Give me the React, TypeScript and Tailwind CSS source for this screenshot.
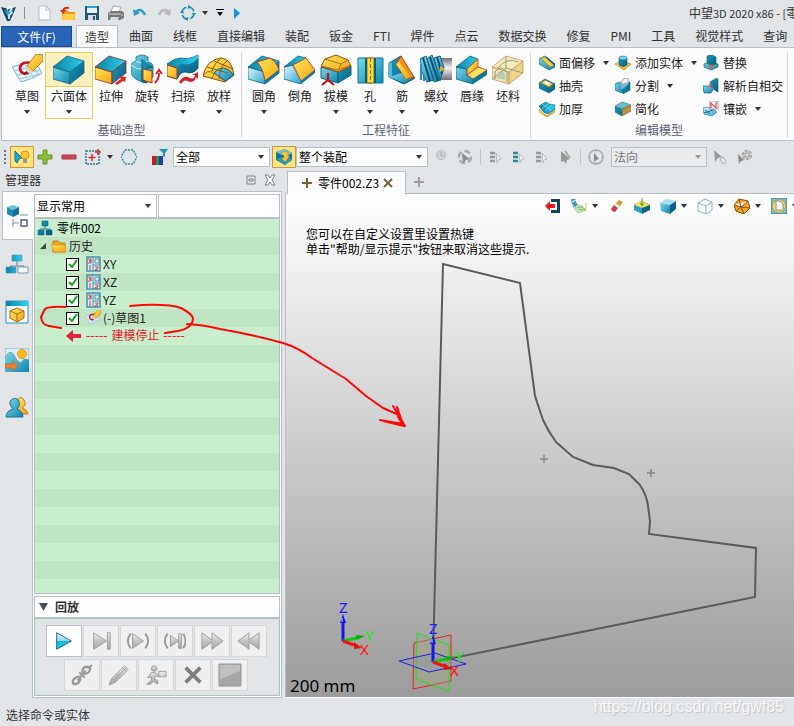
import type { ReactNode } from 'react';
import clsx from 'clsx';

const TOP = 'M0 13 14 2 31 7 17 18Z';
const LEFT = 'M0 13 17 18V30L0 25Z';
const RIGHT = 'M17 18 31 7V19L17 30Z';

function Gradients() {
  return (
    <svg className="absolute size-0" aria-hidden="true">
      <defs>
        <linearGradient id="teal" x1="0" y1="0" x2="1" y2="1">
          <stop offset="0" stopColor="#7fd4ea" />
          <stop offset="1" stopColor="#0a86ac" />
        </linearGradient>
        <linearGradient id="tealDark" x1="0" y1="0" x2="1" y2="1">
          <stop offset="0" stopColor="#1d9cc0" />
          <stop offset="1" stopColor="#075a7c" />
        </linearGradient>
        <linearGradient id="tealTop" x1="0" y1="0" x2="1" y2="0">
          <stop offset="0" stopColor="#0f7f9f" />
          <stop offset="1" stopColor="#2bd0f4" />
        </linearGradient>
        <linearGradient id="pale" x1="0" y1="0" x2="1" y2="1">
          <stop offset="0" stopColor="#e8f6fb" />
          <stop offset="1" stopColor="#1fa9d2" />
        </linearGradient>
        <linearGradient id="gold" x1="0" y1="0" x2="1" y2="1">
          <stop offset="0" stopColor="#ffe95c" />
          <stop offset="1" stopColor="#f6a313" />
        </linearGradient>
        <linearGradient id="metal" x1="0" y1="0" x2="0" y2="1">
          <stop offset="0" stopColor="#6d7074" />
          <stop offset="0.45" stopColor="#f2f2f2" />
          <stop offset="1" stopColor="#6d7074" />
        </linearGradient>
        <linearGradient id="gray" x1="0" y1="0" x2="0" y2="1">
          <stop offset="0" stopColor="#f0f0f0" />
          <stop offset="0.5" stopColor="#c4c4c4" />
          <stop offset="1" stopColor="#a8a8a8" />
        </linearGradient>
        <linearGradient id="play" x1="0" y1="0" x2="0" y2="1">
          <stop offset="0" stopColor="#e2f4fb" />
          <stop offset="0.48" stopColor="#8fd8f0" />
          <stop offset="0.52" stopColor="#12b4e4" />
          <stop offset="1" stopColor="#27d3f5" />
        </linearGradient>
      </defs>
    </svg>
  );
}

type IconProps = { size?: 'lg' | 'md' | 'sm'; children: ReactNode };

// lg is drawn on a 32 grid, md on 24 and sm on 16
function Icon({ size = 'sm', children }: IconProps) {
  const box = size === 'lg' ? 32 : size === 'md' ? 24 : 16;
  return (
    <svg
      viewBox={`0 0 ${box} ${box}`}
      className={clsx('shrink-0', size === 'lg' && 'size-8', size === 'md' && 'size-6', size === 'sm' && 'size-4')}
      fill="none"
      aria-hidden="true"
    >
      {children}
    </svg>
  );
}

function Caret({ className = 'text-[#333]' }: { className?: string }) {
  return (
    <svg viewBox="0 0 6 4" className={clsx('h-1 w-1.5 shrink-0', className)} aria-hidden="true">
      <path d="M0 0h6L3 4Z" fill="currentColor" />
    </svg>
  );
}

function Block({ left = 'url(#teal)', right = 'url(#tealDark)', top = 'url(#tealTop)', stroke = '#0b6884' }) {
  return (
    <g stroke={stroke} strokeWidth="0.8" strokeLinejoin="round">
      <path d={LEFT} fill={left} />
      <path d={RIGHT} fill={right} />
      <path d={TOP} fill={top} />
    </g>
  );
}

const art: Record<string, ReactNode> = {
  sketch: (
    <>
      <path d="M1 13Q12 9 24 7L31 19Q24 24 10 28Q5 20 1 13Z" fill="#e4f2fb" stroke="#7fb0d0" />
      <path d="M3 17 27 11M5 21 30 16M8 25 28 20M7 11 17 26M13 9 23 24M19 8 28 21" stroke="#9cc8e2" />
      <path d="M20 9Q10 7 9 14 9 21 18 19" stroke="#c8102e" strokeWidth="2.6" />
      <path d="M25 0 32 1V7L22 17 16 12Z" fill="url(#gold)" stroke="#a06c10" strokeWidth="0.8" />
      <path d="m16 12 6 5-8 3Z" fill="#f3cfa5" />
      <path d="m15 17 2 2-4 2Z" fill="#333" />
    </>
  ),
  box: <Block />,
  extrude: (
    <>
      <Block left="url(#gold)" stroke="#8c2f22" />
      <path d="M20 29 26 25 24 22 31 23 30 28 28 27 22 31Z" fill="#d8262d" />
    </>
  ),
  revolve: (
    <>
      <path d="M0 10Q4 7 5 7V3Q11-1 17 3V8Q22 9 22 12V23L16 26 11 15V28Q2 25 0 19Z" fill="url(#teal)" stroke="#14708e" strokeWidth="0.8" />
      <path d="M5 7Q11 11 17 7M0 11Q6 16 11 15" stroke="#c9eef8" />
      <path d="M11 5V28L16 29V14L22 13" fill="url(#tealDark)" stroke="#0b5f7d" />
      <path d="M12 15 21 17V29L12 26Z" fill="url(#gold)" stroke="#a43a20" />
      <path d="M24 29Q28 25 28 19M25 20 28 16 31 20" stroke="#d21f2b" strokeWidth="2" />
    </>
  ),
  sweep: (
    <>
      <path d="M0 10Q8 4 14 4Q22 6 31 1V14Q26 21 19 18Q14 17 10 25L0 22Z" fill="url(#tealDark)" stroke="#0b5f7d" />
      <path d="M0 10Q8 4 14 4Q22 6 31 1V4Q24 12 17 10Q13 9 10 13Z" fill="url(#tealTop)" />
      <path d="M0 11 10 14V25L0 22Z" fill="url(#gold)" stroke="#a43a20" />
      <path d="M12 28Q17 20 23 24 27 26 28 21L25 21 31 18V25L29 23Q28 28 23 28 17 24 14 30Z" fill="#d21f2b" />
    </>
  ),
  loft: (
    <>
      <path d="M0 22Q3 6 18 4Q29 5 31 21L22 28Z" fill="url(#gold)" stroke="#96501b" />
      <path d="M11 19Q20 8 31 21L22 27Z" fill="url(#teal)" stroke="#0b5f7d" />
      <path d="M4 13 25 19M11 7 30 15M18 4Q8 12 8 24M24 7Q18 10 16 25" stroke="#8e5a1b" />
      <path d="M0 22Q5 14 11 20L9 24Z" fill="#ffd530" stroke="#96501b" strokeWidth="0.8" />
    </>
  ),
  fillet: (
    <>
      <Block left="url(#pale)" />
      <path d="M9 8 22 4Q29 8 31 16L17 27Q15 14 9 8Z" fill="url(#gold)" stroke="#b03a20" />
      <path d="M17 27 31 16V19L17 30Z" fill="#0c7ca1" />
    </>
  ),
  chamfer: (
    <>
      <path d="M0 13 9 11 17 27V30L0 25Z" fill="url(#pale)" stroke="#0b6884" strokeWidth="0.8" />
      <path d="M0 13 14 2 22 4 9 11Z" fill="url(#tealTop)" stroke="#0b6884" strokeWidth="0.8" />
      <path d="M9 11 22 4 31 16 17 27Z" fill="url(#gold)" stroke="#c34928" />
      <path d="M17 27 31 16V19L17 30Z" fill="#0c7ca1" />
    </>
  ),
  draft: (
    <>
      <path d="M1 13 18 18V29L1 24Z" fill="url(#teal)" stroke="#0b6884" />
      <path d="M18 18 31 12V21L18 29Z" fill="url(#tealDark)" stroke="#0b6884" />
      <path d="M1 12 5 5 16 1 28 6 31 12 18 18Z" fill="url(#gold)" stroke="#a2421e" />
      <path d="M1 12 18 16 31 11M18 17 21 10 28 6M5 5 21 10" stroke="#b66b16" />
      <path d="M8 19V26M2 31 8 26 14 31" stroke="#b51820" strokeWidth="2.2" />
    </>
  ),
  hole: (
    <>
      <path d="M4 4H29V29H4Z" fill="url(#teal)" stroke="#0b7897" />
      <path d="M13 4H20V29H13Z" fill="#ffda2e" stroke="#9d7b17" />
      <path d="M16.500 4V29" stroke="#946c18" strokeDasharray="4 2" />
      <path d="M13 4H11V29H13M20 4H22V29H20" fill="#075f7e" />
    </>
  ),
  rib: (
    <>
      <path d="M3 9 15 2V19L29 24 18 30 3 23Z" fill="url(#tealDark)" stroke="#095573" />
      <path d="M3 23 15 19 29 23 18 29Z" fill="url(#teal)" />
      <path d="M3 9 6 8V22L3 24Z" fill="#4bbcdd" />
      <path d="M15 2 28 23 20 25 10 10Z" fill="#f08f14" stroke="#b3441d" />
      <path d="M10 10 13 8 25 23 20 25Z" fill="url(#gold)" />
    </>
  ),
  thread: (
    <>
      <path d="M18 4H32V26H18Z" fill="url(#metal)" />
      <path d="M0 5 6 2 14 26 7 28 0 14ZM7 5 12 1 21 26 14 28Z" fill="url(#teal)" stroke="#145f83" />
      <path d="M14 4 20 2 24 14 20 26Z" fill="url(#teal)" stroke="#145f83" />
      <path d="M3 4 10 27M10 3 18 27M17 3 22 20" stroke="#074f77" strokeWidth="2" />
      <path d="M20 12 25 15 20 18" fill="#f6a313" />
      <path d="M1 10V26M4 22V27" stroke="#258fc0" strokeWidth="2" />
    </>
  ),
  lip: (
    <>
      <path d="M0 13 11 15V22L17 24V30L0 25Z" fill="url(#teal)" stroke="#0b6884" strokeWidth="0.8" />
      <path d="M0 13 14 2 22 5 11 15Z" fill="url(#tealTop)" stroke="#0b6884" strokeWidth="0.8" />
      <path d="M11 15 22 5V13L11 21Z" fill="url(#gold)" stroke="#aa3c22" strokeWidth="0.8" />
      <path d="M11 21 22 13 31 16 17 25Z" fill="#ffe066" stroke="#aa3c22" strokeWidth="0.8" />
      <path d="M17 25 31 16V21L17 30Z" fill="#0b7798" />
    </>
  ),
  stock: (
    <>
      <g opacity="0.8">
        <Block left="#f3dd9c" right="#edca6b" top="#f8e7a4" stroke="#b67739" />
      </g>
      <path d="M3 25V18Q8 10 15 18V28M6 14Q14 3 26 8M0 25 14 14 31 19M14 2V14" stroke="#8c9d80" />
      <path d="M5 24V20Q9 14 13 20V26Z" fill="#9bc5bc" opacity="0.7" />
    </>
  ),
};

const smallArt: Record<string, ReactNode> = {
  offset: (
    <>
      <path d="M0 4 6 1 16 9V12L10 15 0 9Z" fill="url(#teal)" stroke="#0b6884" strokeWidth="0.7" />
      <path d="M2 3 6 2 15 10 11 12Z" fill="#ffcc2d" stroke="#98731c" strokeWidth="0.6" />
      <path d="m6 2 9 8 1-1L8 2Z" fill="#086b8d" />
    </>
  ),
  shell: (
    <>
      <path d="m0 5 6-4 10 5v5l-6 4L0 10Z" fill="url(#tealDark)" stroke="#0b6884" strokeWidth="0.7" />
      <path d="m2 5 4-3 8 4-4 3Z" fill="#ffd65d" stroke="#b26f22" strokeWidth="0.8" />
      <path d="m5 5 2-2 4 2-2 2Z" fill="#fff" />
    </>
  ),
  thicken: (
    <>
      <path d="m0 8 8 7 8-7v3l-8 5-8-5Z" fill="url(#gold)" stroke="#b26f22" strokeWidth="0.5" />
      <path d="M0 5 7 1Q10 4 16 4V8L9 13Q4 12 0 5Z" fill="url(#tealTop)" stroke="#0b6884" strokeWidth="0.7" />
      <path d="m3 8 7-6M6 10l7-6M3 3l9 6" stroke="#a4e1f0" strokeWidth="0.6" />
    </>
  ),
  add: (
    <>
      <path d="m0 9 6-3 10 3-7 6Z" fill="url(#gold)" stroke="#a67618" strokeWidth="0.6" />
      <path d="M4 3v7q4 3 8 0V3Z" fill="url(#tealDark)" stroke="#0b6884" strokeWidth="0.6" />
      <ellipse cx="8" cy="3" rx="4" ry="2" fill="#75d4ef" stroke="#0b6884" strokeWidth="0.6" />
    </>
  ),
  divide: (
    <>
      <path d="m0 6 4-2 4 2v9l-4-1-4-2Z" fill="url(#teal)" stroke="#0b6884" strokeWidth="0.6" />
      <path d="m8 6 7-2v8l-7 4Z" fill="url(#tealDark)" stroke="#0b6884" strokeWidth="0.6" />
      <path d="m6 5 2-4 5-1v6l-6 5Z" fill="#e2f0f5" fillOpacity="0.5" stroke="#97aeb9" />
    </>
  ),
  simplify: (
    <>
      <path d="m0 5 7-4 9 3v6l-9 5-7-4Z" fill="url(#tealDark)" stroke="#56666c" strokeWidth="0.7" />
      <path d="m0 5 7-4 9 3-8 4Z" fill="#69b9cd" />
      <path d="m8 8 8-4v6l-9 5Z" fill="#c58c40" />
      <path d="m6 7 8-3 2 2-8 4Z" fill="#7ab356" />
      <path d="m7 8 9-3" stroke="#db4938" />
    </>
  ),
  replace: (
    <>
      <path d="m1 9 6-2 8 2v3l-7 3-7-3Z" fill="url(#teal)" stroke="#0b6884" strokeWidth="0.7" />
      <path d="m4 1 5-1 4 2v7l-6 1-3-2Z" fill="url(#tealDark)" stroke="#0b6884" strokeWidth="0.7" />
      <path d="M5 11q4-3 6 0-2 3-6 0" fill="#ee5e37" />
    </>
  ),
  resolve: (
    <>
      <path d="m7 4 7-4 1 2v12l-5-3Z" fill="url(#tealDark)" stroke="#0b6884" strokeWidth="0.7" />
      <path d="M0 8h7l4 2-3 5H1Z" fill="url(#teal)" stroke="#0b6884" strokeWidth="0.7" />
      <path d="m6 6 5 5" stroke="#e5463e" strokeWidth="1.300" />
    </>
  ),
  inlay: (
    <>
      <path d="m0 7 5-1 9 5-5 4-8-2Z" fill="url(#pale)" stroke="#28839e" strokeWidth="0.7" />
      <path d="m2 9 5 4M1 12l9-3" stroke="#176f93" />
      <path d="M7 0h8v8H7Z" fill="#fff" stroke="#777" strokeWidth="0.7" />
      <path d="M8 7V2l5 5V1" stroke="#df3c43" strokeWidth="1.100" />
    </>
  ),
};

const menuTabs = ['曲面', '线框', '直接编辑', '装配', '钣金', 'FTI', '焊件', '点云', '数据交换', '修复', 'PMI', '工具', '视觉样式', '查询'];

type Tool = { label: string; icon: string; caret?: boolean; active?: boolean; width?: string };

const basicTools: Tool[] = [
  { label: '草图', icon: 'sketch', caret: true },
  { label: '六面体', icon: 'box', caret: true, active: true, width: 'w-12' },
  { label: '拉伸', icon: 'extrude' },
  { label: '旋转', icon: 'revolve' },
  { label: '扫掠', icon: 'sweep', caret: true },
  { label: '放样', icon: 'loft', caret: true },
];

const featureTools: Tool[] = [
  { label: '圆角', icon: 'fillet', caret: true },
  { label: '倒角', icon: 'chamfer' },
  { label: '拔模', icon: 'draft', caret: true },
  { label: '孔', icon: 'hole', caret: true, width: 'w-8' },
  { label: '筋', icon: 'rib', caret: true, width: 'w-8' },
  { label: '螺纹', icon: 'thread', caret: true },
  { label: '唇缘', icon: 'lip' },
  { label: '坯料', icon: 'stock' },
];

const editColumns: Tool[][] = [
  [
    { label: '面偏移', icon: 'offset', caret: true },
    { label: '抽壳', icon: 'shell' },
    { label: '加厚', icon: 'thicken' },
  ],
  [
    { label: '添加实体', icon: 'add', caret: true },
    { label: '分割', icon: 'divide', caret: true },
    { label: '简化', icon: 'simplify' },
  ],
  [
    { label: '替换', icon: 'replace' },
    { label: '解析自相交', icon: 'resolve' },
    { label: '镶嵌', icon: 'inlay', caret: true },
  ],
];

function ToolButton({ tool }: { tool: Tool }) {
  return (
    <button
      className={clsx(
        'flex shrink-0 flex-col items-center border pb-1 whitespace-nowrap',
        tool.width ?? 'w-9',
        tool.active ? 'border-[#eecb59]' : 'border-transparent',
      )}
    >
      <span className={clsx('flex justify-center self-stretch border-b pt-px', tool.active ? 'border-[#eecb59] bg-[#fdf0bf]' : 'border-transparent')}>
        <Icon size="lg">{art[tool.icon]}</Icon>
      </span>
      <span className="mt-px leading-4">{tool.label}</span>
      <span className="mt-1.5 h-1">{tool.caret && <Caret />}</span>
    </button>
  );
}

function RibbonGroup({ title, children }: { title: string; children: ReactNode }) {
  return (
    <section className="mt-1 mb-0.5 flex shrink-0 flex-col border-r border-[#d5d9de]">
      <div className="flex flex-1">{children}</div>
      <h2 className="mt-[3px] text-center leading-4 text-[#5b6475]">{title}</h2>
    </section>
  );
}

function QuickAccess() {
  return (
    <header className="flex h-[25px] shrink-0 items-center">
      <svg viewBox="0 0 16 16" className="ml-px size-4 shrink-0" aria-label="ZW3D">
        <path d="m0 2 8 2 7-2-2 5-4 9H6L3 9Z" fill="#183f60" />
        <path d="m3 5 5 1 5-2-3 6-2 5-2-5Z" fill="#2a9ad4" />
        <path d="M6 5 9 1l2 2-2 3 2 2-3 2v4" fill="none" stroke="#e8f6fb" strokeWidth="1.500" />
      </svg>
      <span className="mr-2 ml-[7px] h-3 w-px bg-[#8b8f93]" />
      <nav className="ml-[3px] flex items-center gap-2">
        <button aria-label="新建">
          <Icon><path d="M3 1h7l4 4v10H3Z" fill="#fff" stroke="#a9bdd0" /><path d="M10 1v4h4" stroke="#a9bdd0" /></Icon>
        </button>
        <button aria-label="打开">
          <Icon>
            <path d="M2 5h5l2 2h6v8H2Z" fill="#e99d1d" />
            <path d="M3 9h13l-2 6H2Z" fill="#ffcf43" />
            <path d="M3 6Q4 2 9 3" stroke="#dc2f23" strokeWidth="2" /><path d="m0 5 3 4 3-4Z" fill="#dc2f23" />
          </Icon>
        </button>
        <button aria-label="保存">
          <Icon><path d="M1 1h14v14H1Z" fill="#27566e" /><path d="M3 1h10v7H3Z" fill="#eaf2f6" /><path d="M3 2h10" stroke="#21a8d3" strokeWidth="2" /><path d="M4 10h8v5H4Z" fill="#d6dde1" /><path d="M9 11h2v4H9Z" fill="#27566e" /></Icon>
        </button>
        <button aria-label="打印">
          <Icon><path d="m5 1 8 1-2 5H3Z" fill="#fafafa" stroke="#aaa" /><path d="m0 8 3-2h11l2 2v5l-4 2H0Z" fill="#777a7d" /><path d="M1 9h12" stroke="#d5d5d5" /><path d="M3 12h8l-1 3H2Z" fill="#ddd" /><path d="M13 10h2" stroke="#ffd22e" /></Icon>
        </button>
        <button aria-label="撤销">
          <Icon><path d="M4 7Q9 2 13 10" stroke="#2d9dc2" strokeWidth="2.500" /><path d="m1 4 1 7 6-3Z" fill="#2d9dc2" /></Icon>
        </button>
        <button aria-label="重做">
          <Icon><path d="M12 7Q7 2 3 10" stroke="#b7bbbf" strokeWidth="2.500" /><path d="m15 4-1 7-6-3Z" fill="#b7bbbf" /></Icon>
        </button>
        <button aria-label="刷新" className="flex items-center gap-1.5">
          <Icon>
            <circle cx="8" cy="8" r="6" stroke="#2288a8" strokeWidth="1.500" strokeDasharray="7 2.400" />
            <circle cx="8" cy="8" r="5" stroke="#8ed3e4" />
            <path d="m8 0 3 2-3 2ZM16 8l-2 3-2-3ZM8 16l-3-2 3-2ZM0 8l2-3 2 3Z" fill="#2288a8" />
          </Icon>
          <Caret />
        </button>
        <button aria-label="自定义" className="flex flex-col items-center gap-0.5">
          <span className="h-px w-2 bg-black" />
          <Caret className="text-black" />
        </button>
        <button aria-label="运行">
          <Icon><path d="M2 3v11l6-6Z" fill="#1592e8" /></Icon>
        </button>
      </nav>
      <h1 className="ml-auto w-[105px] shrink-0 overflow-hidden whitespace-nowrap text-[#333]">
        中望<span className="text-[11px]">3D 2020 x86 - [</span>零件002.Z3]
      </h1>
    </header>
  );
}

function Ribbon() {
  return (
    <>
      <nav className="flex h-[22px] shrink-0 items-stretch overflow-hidden pl-px whitespace-nowrap text-[#333]">
        <button className="mt-px w-[71px] shrink-0 border border-[#1c4c93] bg-[#2763b7] text-white">文件(F)</button>
        <button className="z-10 ml-1 w-[42px] shrink-0 border border-b-0 border-[#b9bec7] bg-[#fcfcfc]">造型</button>
        <div className="ml-[11px] flex items-center gap-5">
          {menuTabs.map((tab) => (
            <button key={tab} className="shrink-0">{tab}</button>
          ))}
        </div>
      </nav>
      <div className="ml-px flex shrink-0 overflow-hidden border border-r-0 border-[#b9bec7] bg-[#fcfcfc] whitespace-nowrap">
        <RibbonGroup title="基础造型">
          <div className="flex pr-1 pl-[7px]">
            {basicTools.map((tool) => <ToolButton key={tool.label} tool={tool} />)}
          </div>
        </RibbonGroup>
        <RibbonGroup title="工程特征">
          <div className="flex px-1">
            {featureTools.map((tool) => <ToolButton key={tool.label} tool={tool} />)}
          </div>
        </RibbonGroup>
        <RibbonGroup title="编辑模型">
          <div className="flex gap-1.5 pr-1 pl-2">
            {editColumns.map((column) => (
              <div key={column[0].label} className="flex flex-col gap-[3px] pt-px">
                {column.map((tool) => (
                  <button key={tool.label} className="flex h-5 items-center gap-1">
                    <Icon>{smallArt[tool.icon]}</Icon>
                    {tool.label}
                    {tool.caret && <span className="pl-1"><Caret /></span>}
                  </button>
                ))}
              </div>
            ))}
          </div>
        </RibbonGroup>
      </div>
    </>
  );
}

type ComboProps = { label: string; options: string[]; className?: string; disabled?: boolean };

function Combo({ label, options, className, disabled }: ComboProps) {
  return (
    <div className={clsx('grid shrink-0 items-center', className)}>
      <select
        aria-label={label}
        disabled={disabled}
        className={clsx(
          'col-start-1 row-start-1 h-full w-full appearance-none border border-[#b9bfc9] px-0.5 outline-none',
          disabled ? 'bg-[#e8eaec] text-[#777]' : 'bg-white text-black',
        )}
      >
        {options.map((option) => <option key={option}>{option}</option>)}
      </select>
      <span className="pointer-events-none col-start-1 row-start-1 mr-1.5 justify-self-end">
        <Caret className={disabled ? 'text-[#999]' : 'text-[#333]'} />
      </span>
    </div>
  );
}

function Divider() {
  return <span className="h-4 w-px shrink-0 bg-[#c1c5ca]" />;
}

function SelectionBar() {
  return (
    <div className="flex h-7 shrink-0 items-center overflow-hidden pt-1">
      <svg viewBox="0 0 2 16" className="mx-1 h-4 w-0.5 shrink-0"><path d="M1 1v15" stroke="#6c7780" strokeWidth="2" strokeDasharray="2 2" /></svg>
      <button aria-label="智能选择" className="flex h-[22px] w-6 shrink-0 items-center justify-center border border-[#c89c3d] bg-[#fde27f]">
        <Icon><path d="m1 2 7 7-3 1-2 4-2-2Z" fill="#1fa7d0" stroke="#0c7ba0" /><circle cx="11" cy="6" r="4" fill="#ffc72f" stroke="#d89815" /><path d="M9 10h4v4H9Z" fill="#999" /></Icon>
      </button>
      <div className="ml-[3px] flex items-center gap-2">
        <button aria-label="添加"><Icon><path d="M6 1h4v5h5v4h-5v5H6v-5H1V6h5Z" fill="#8fbd35" stroke="#6a962a" /></Icon></button>
        <button aria-label="移除"><Icon><path d="M1 6h14v4H1Z" fill="#d04854" stroke="#ae3440" /></Icon></button>
        <button aria-label="框选" className="flex items-center gap-1.5">
          <Icon><path d="M1 2h13v13H1Z" stroke="#277b98" strokeWidth="1.500" strokeDasharray="2 1" /><path d="M7 5v7M3.500 8.500h7" stroke="#e22b37" strokeWidth="1.500" /><path d="M13 0v6M10 3h6" stroke="#e22b37" strokeWidth="1.500" /></Icon>
          <Caret />
        </button>
        <button aria-label="多边形选择"><Icon><path d="M4 1h8l4 7-4 7H4L0 8Z" stroke="#3989ab" strokeWidth="1.500" strokeDasharray="2 1" /></Icon></button>
      </div>
      <span className="mr-2 ml-[7px]"><Divider /></span>
      <button aria-label="颜色过滤"><Icon><path d="M0 7h4v9H0Z" fill="#c81927" /><path d="M4 7h3v9H4Z" fill="#17984c" /><path d="M7 7h4v9H7Z" fill="#273aaa" /><path d="M7 0h9l-3 4v4l-2-1V4Z" fill="#1999bb" /></Icon></button>
      <Combo label="过滤器" options={['全部']} className="ml-[5px] h-5 w-[97px]" />
      <button aria-label="拾取范围" className="ml-0.5 flex h-[22px] w-6 shrink-0 items-center justify-center border border-[#c89c3d] bg-[#fde27f]">
        <svg viewBox="0 0 18 18" className="size-[18px]" aria-hidden="true"><path d="m1 4 9-3 7 4v7l-7 5-9-5Z" fill="#0a7596" /><path d="m1 4 9-3 7 4-6 4Z" fill="#7cc4d6" /><path d="m1 11 10-3 6 3-7 6Z" fill="#2b9dba" /><path d="M7 4h6v4h2l-5 6-4-4h3V7H7Z" fill="url(#gold)" stroke="#9d7419" strokeWidth="0.5" /></svg>
      </button>
      <Combo label="装配范围" options={['整个装配']} className="h-5 w-[132px]" />
      <div className="ml-1.5 flex items-center gap-[7px] text-[#aaa]">
        <button disabled aria-label="历史"><Icon><circle cx="7" cy="6" r="4.500" fill="#d3d4d5" stroke="#b9babc" /><path d="M7 3v4h3" stroke="#aaa" /></Icon></button>
        <button disabled aria-label="重选"><Icon><circle cx="8" cy="8" r="6" stroke="currentColor" strokeWidth="2.500" strokeDasharray="6 3" /><path d="m5 4 8 6-4 1-3 3Z" fill="#8c8c8c" /></Icon></button>
        <Divider />
        {['#999', '#2d889b', '#999'].map((color, index) => (
          <button key={index} disabled aria-label={`列表 ${index + 1}`}>
            <Icon><path d="M2 4h5M2 8h5M2 12h5" stroke={color} strokeWidth="2.500" /><path d="m8 4 5 6-3 1-1 3Z" fill="#f2f2f2" stroke="#bbb" /></Icon>
          </button>
        ))}
        <button disabled aria-label="拾取"><Icon><path d="m4 2 9 8-3 1-1 4-2-3-3 1Z" fill="#999" /><path d="m8 2 5 7" stroke="#aaa" strokeWidth="2" /></Icon></button>
        <Divider />
        <button disabled aria-label="定位"><Icon><circle cx="8" cy="8" r="7" stroke="currentColor" strokeWidth="1.500" /><path d="M8 0v3M0 8h3M13 8h3M8 13v3" stroke="currentColor" /><path d="m6 4 5 6-3 1-2 2Z" fill="#888" /></Icon></button>
      </div>
      <Combo label="方向" options={['法向']} disabled className="ml-[7px] h-5 w-24" />
      <div className="ml-1.5 flex items-center gap-2">
        <button disabled aria-label="选择方向"><Icon><path d="m1 1 8 7-4 1-3 4Z" fill="#9b9b9b" /><path d="m7 10 3-2 3 5-3 2Z" fill="#eee" stroke="#aaa" /></Icon></button>
        <button disabled aria-label="选择设置"><Icon><circle cx="10" cy="6" r="4" stroke="#aaa" strokeWidth="2.500" strokeDasharray="3 1" /><circle cx="10" cy="6" r="2" stroke="#999" /><path d="m1 5 6 6-3 1-2 3Z" fill="#888" /></Icon></button>
      </div>
    </div>
  );
}

const sideTabs: { label: string; icon: ReactNode }[] = [
  {
    label: '历史管理',
    icon: (
      <>
        <path d="m1 3 6-2 6 2-6 3Z" fill="#66c5e3" /><path d="m1 3 6 3v7l-6-3Z" fill="#248db2" /><path d="m7 6 6-3v7l-6 3Z" fill="#0d7198" />
        <path d="M14 11h8M7 15v8M7 19h6" stroke="#7e91a5" /><path d="M15 16h6v6h-6Z" stroke="#52657d" strokeWidth="1.500" />
      </>
    ),
  },
  {
    label: '装配管理',
    icon: (
      <>
        <path d="M12 9v5M5 17v-3h14v3" stroke="#607b91" /><path d="M7 3h10v6H7ZM1 15h10v6H1Z" fill="url(#tealTop)" stroke="#4b91ac" strokeWidth="0.6" /><path d="M13 15h10v6H13Z" fill="#f2f8fa" stroke="#8199ac" />
      </>
    ),
  },
  {
    label: '视图管理',
    icon: (
      <>
        <path d="M1 1h22v22H1Z" fill="#f3fafc" stroke="#3593b2" /><path d="M1 1h22v5H1Z" fill="url(#tealTop)" />
        <path d="m5 11 7-3 7 3v7l-7 4-7-4Z" fill="url(#gold)" stroke="#a86c14" /><path d="m5 11 7 3 7-3M12 14v8" stroke="#a86c14" />
      </>
    ),
  },
  {
    label: '视觉管理',
    icon: (
      <>
        <path d="M0 0h24v24H0Z" fill="#d9eef7" stroke="#74a9c2" /><path d="M0 11Q5-1 10 8T17 13 24 12V24H0Z" fill="url(#teal)" /><path d="M0 10Q5-1 10 9T17 13" stroke="#7b9fb7" /><circle cx="17" cy="6" r="4.500" fill="#ffb91c" stroke="#e89817" /><path d="M0 16h7v-3l6 5-6 5v-3H0Z" fill="#ef7e34" stroke="#b95b29" strokeWidth="0.6" />
      </>
    ),
  },
  {
    label: '角色管理',
    icon: (
      <>
        <path d="M12 4Q16-1 19 4T17 12Q22 13 23 18H10Z" fill="url(#gold)" stroke="#c17a23" /><path d="M1 21Q1 15 8 13 3 8 6 4 11 0 14 5 16 10 12 13 18 15 18 21Z" fill="url(#teal)" stroke="#27728f" />
      </>
    ),
  },
];

const planes = ['XY', 'XZ', 'YZ'];

function TreeCheck({ label, icon }: { label: string; icon: ReactNode }) {
  return (
    <li>
      <label className="flex h-[18px] items-center pl-[31px]">
        <span className="grid size-[13px] place-items-center">
          <input type="checkbox" defaultChecked className="peer col-start-1 row-start-1 size-[13px] appearance-none border border-black bg-white" />
          <svg viewBox="0 0 12 12" className="pointer-events-none invisible col-start-1 row-start-1 size-3 peer-checked:visible" fill="none" aria-hidden="true">
            <path d="m2 6 3 3 5-7" stroke="#14a126" strokeWidth="2" />
          </svg>
        </span>
        <span className="mr-0.5 ml-1.5"><Icon>{icon}</Icon></span>
        {label}
      </label>
    </li>
  );
}

function HistoryTree() {
  return (
    <ul className="flex-1 overflow-hidden border border-[#b9bfc9] bg-[repeating-linear-gradient(#c8eecd_0px,#c8eecd_18px,#bfe5c4_18px,#bfe5c4_36px)] text-[#222]">
      <li className="flex h-[18px] items-center gap-1 pl-0.5 text-black">
        <Icon><path d="M8 6v3M3 11V9h10v2" stroke="#2f7c97" /><path d="M5 1h6v5H5ZM1 10h6v5H1ZM9 10h6v5H9Z" fill="url(#tealDark)" stroke="#075a7c" strokeWidth="0.5" /></Icon>
        零件002
      </li>
      <li className="flex h-[18px] items-center pl-1">
        <svg viewBox="0 0 8 8" className="mr-1 size-2" aria-hidden="true"><path d="M7 1v6H1Z" fill="#444" /></svg>
        <Icon><path d="M2 14V3h5l2 2h5v9Z" fill="#f4a51e" stroke="#cb7d12" /><path d="m0 6 4 1h10l1 7H3Z" fill="url(#gold)" stroke="#d79220" strokeWidth="0.7" /></Icon>
        <span className="ml-0.5">历史</span>
      </li>
      {planes.map((plane) => (
        <TreeCheck
          key={plane}
          label={plane}
          icon={
            <>
              <path d="M2 1h13v14H2Z" fill="#d9ebf1" stroke="#4a90a8" strokeWidth="1.500" />
              <path d="M8 1v14M8 9h7M10 3h4v4h-4Z" stroke="#4a90a8" />
              <path d="M3 3h3v2H4h2v2H3M5 9v5M10 11h3v1l-3 2h3" stroke="#c14545" />
            </>
          }
        />
      ))}
      <TreeCheck label="(-)草图1" icon={<g transform="scale(0.5)">{art.sketch}</g>} />
      <li className="flex h-[18px] items-center pl-[31px] text-[#e8222c]">
        <Icon><path d="M0 8 7 2v4h8v4H7v4Z" fill="#e0223f" /></Icon>
        <span className="ml-1 font-['DejaVu_Sans','Noto_Sans_CJK_SC',sans-serif] whitespace-pre">----- 建模停止 -----</span>
      </li>
    </ul>
  );
}

const playback: { label: string; icon: ReactNode }[][] = [
  [
    { label: '播放', icon: <path d="M4 3v18l16-9Z" fill="url(#play)" stroke="#215b78" /> },
    { label: '播放到下一个', icon: <><path d="M4 3v18l14-9Z" /><path d="M19 3h3v18h-3Z" /></> },
    { label: '播放特征', icon: <><path d="M6 4v16l12-8Z" /><path d="M4 4q-6 8 0 16M20 4q6 8 0 16" fill="none" strokeWidth="2" /></> },
    { label: '播放到特征', icon: <><path d="M7 6v12l9-6Z" /><path d="M16 4h3v16h-3Z" /><path d="M4 4q-6 8 0 16M21 4q5 8 0 16" fill="none" strokeWidth="2" /></> },
    { label: '快进', icon: <path d="M1 3v18l11-8v8l12-9-12-9v8Z" /> },
    { label: '快退', icon: <path d="M23 3v18l-11-8v8L0 12l12-9v8Z" /> },
  ],
  [
    { label: '链接', icon: <><path d="M3 22q-3-4 2-7 6-3 5 2-1 5-7 5ZM13 10q-2-6 4-7 6 0 3 5-3 4-7 2Z" fill="none" strokeWidth="2.500" /><path d="m7 18 9-11M9 9l6 6M19 5l4-4" strokeWidth="2" /></> },
    { label: '编辑', icon: <><path d="M1 23 4 16 18 2l4 4L8 20Z" /><path d="m16 4 4 4M4 16l4 4M6 18 20 4" fill="none" /></> },
    { label: '执行', icon: <><circle cx="10" cy="5" r="3" /><path d="m7 9 5 1 3 3v-5h8v6h-8l-4-1-1 3 4 2v4l-5-3-3 3H2l5-4v-4l-4 1Z" /></> },
    { label: '删除', icon: <path d="m4 4 16 16M20 4 4 20" fill="none" stroke="#7f7f7f" strokeWidth="4" /> },
    { label: '停止', icon: <><path d="M1 1h22v22H1Z" fill="#a6a6a6" /><path d="M2 2h20v6Q13 11 2 17Z" fill="#c0c0c0" stroke="none" /></> },
  ],
];

function Playback() {
  return (
    <section className="shrink-0">
      <h2 className="mt-0.5 flex h-[22px] items-center gap-[7px] border border-[#b9bfc9] bg-white pl-1 text-[12px] font-bold text-[#333]">
        <svg viewBox="0 0 9 8" className="h-2 w-[9px]" aria-hidden="true"><path d="M0 0h9L4.500 8Z" fill="#4a5057" /></svg>
        回放
      </h2>
      <div className="flex flex-col items-center gap-0.5 border border-[#b9bfc9] bg-[#e1e5e8] pt-1.5 pr-0.5 pb-1 outline -outline-offset-2 outline-[#c8eecd]">
        {playback.map((row, index) => (
          <div key={index} className="flex gap-px">
            {row.map((item) => (
              <button
                key={item.label}
                aria-label={item.label}
                className={clsx(
                  'flex h-8 w-9 items-center justify-center border',
                  item.label === '播放' ? 'border-[#b9bfc9] bg-white' : 'border-[#d3d7db] bg-[#efefef]',
                )}
              >
                <svg viewBox="0 0 24 24" className={item.label === '停止' ? 'size-6' : 'size-[22px]'} fill="url(#gray)" stroke="#999" aria-hidden="true">{item.icon}</svg>
              </button>
            ))}
          </div>
        ))}
      </div>
    </section>
  );
}

function Manager() {
  return (
    <aside className="flex w-[282px] shrink-0 flex-col pl-0.5">
      <header className="flex h-[22px] shrink-0 items-center pl-[3px] text-[#333]">
        <h2 className="leading-4">管理器</h2>
        <div className="ml-auto flex items-center gap-2 pr-1.5">
          <button aria-label="浮动">
            <svg viewBox="0 0 10 10" className="size-2.5" fill="none"><path d="M1 1h8v8H1Z" stroke="#7c8186" /><path d="M3 4h4v2H3Z" stroke="#7c8186" /></svg>
          </button>
          <button aria-label="关闭">
            <svg viewBox="0 0 12 12" className="size-3" fill="none"><path d="M1 1h3l2 3 2-3h3L8 6l3 5H8L6 8l-2 3H1l3-5Z" fill="#fff" stroke="#7c8186" /></svg>
          </button>
        </div>
      </header>
      <div className="flex min-h-0 flex-1 border-t border-r border-[#b9bfc9]">
        <nav className="flex w-[31px] shrink-0 flex-col">
          {sideTabs.map((tab, index) => (
            <button
              key={tab.label}
              aria-label={tab.label}
              className={clsx('flex h-12 items-center justify-center', index === 0 ? 'border-b border-l border-[#b9bfc9] bg-[#fcfcfc]' : 'border-r border-[#b9bfc9]')}
            >
              <Icon size="md">{tab.icon}</Icon>
            </button>
          ))}
          <span className="flex-1 border-r border-[#b9bfc9]" />
        </nav>
        <div className="flex min-w-0 flex-1 flex-col border-b border-[#b9bfc9] bg-[#fcfcfc] pt-0.5 pr-px pb-px pl-px">
          <div className="flex h-6 shrink-0 items-stretch gap-px">
            <Combo label="显示" options={['显示常用']} className="w-[123px]" />
            <input aria-label="搜索" className="min-w-0 flex-1 border border-[#b9bfc9] bg-white px-1 outline-none" />
          </div>
          <HistoryTree />
          <Playback />
        </div>
      </div>
    </aside>
  );
}

const viewTools: { label: string; icon: ReactNode; caret?: boolean }[] = [
  { label: '退出', icon: <><path d="M6 1h9v14H6v-3h6V4H6Z" fill="#173f58" /><path d="m0 8 5-5v3h5v4H5v3Z" fill="#ed161b" /></> },
  { label: '基准', caret: true, icon: <><path d="m2 9 8-2 5 5-8 3Z" fill="#d1efc9" stroke="#65ba59" strokeDasharray="1 1" /><path d="m4 10 8-1M6 12l8-1M7 8l4 6M10 8l4 5" stroke="#65ba59" strokeWidth="0.7" /><path d="M0 1h5v3l2 3-4 2-2-3Z" fill="#4c9ac1" /><path d="m1 4 4-2" stroke="#fff" /><path d="M15 5v7h-3" stroke="#e6b64d" /></> },
  { label: '橡皮', icon: <><path d="m3 11 3-4 4 3-3 4q-3 0-4-3Z" fill="#c54254" /><path d="m6 7 4 3 2-2-4-3Z" fill="#fff4d1" stroke="#aaa" strokeWidth="0.5" /><path d="m8 5 3-3 4 2-3 4Z" fill="#d49b2c" /></> },
  { label: '视图', icon: <><path d="m0 7 8-4 8 4-8 3Z" fill="#ffe65a" stroke="#9c8620" strokeWidth="0.5" /><path d="m0 7 8 3v6l-8-4Z" fill="#27a0c5" /><path d="m8 10 8-3v5l-8 4Z" fill="#0b6385" /><path d="M8 0v7M6 5l2 3 2-3" stroke="#4b9c34" /></> },
  { label: '着色', caret: true, icon: <><path d="m0 5 6-4 10 2-6 4Z" fill="#a6dcf1" /><path d="m0 5 10 2v9L1 13Z" fill="url(#teal)" /><path d="m10 7 6-4v8l-6 5Z" fill="#0b6088" /></> },
  { label: '线框', caret: true, icon: <path d="m1 5 7-4 7 3v8l-6 4-8-3ZM1 5l8 3 6-4M9 8v8" stroke="#6d9bbc" fill="#fff" strokeWidth="0.8" /> },
  { label: '网格', caret: true, icon: <path d="m0 7 5-6 9 2 2 7-6 6-8-3ZM0 7l7 2 7-6M7 9l9 1M7 9l3 7M7 9l-5 4M7 9 5 1" fill="#f5aa20" stroke="#8f4b17" /> },
  { label: '属性', caret: true, icon: <><path d="M0 0h16v16H0Z" fill="#74bcd4" stroke="#35758c" /><circle cx="8" cy="8" r="6.500" fill="#ffe06b" stroke="#c39b2c" /><path d="M5 3h4l3 3v6H5Z" fill="#fff" stroke="#7e8a91" /></> },
];

// Small coordinate triad, origin at (0, 0)
function Triad() {
  return (
    <g fontSize="15" strokeWidth="3">
      <path d="M0 0V-20" stroke="#1717e8" />
      <path d="m-3-18 3-9 3 9Z" fill="#1717e8" />
      <path d="M-1-19v-4" stroke="#c8c8ff" strokeWidth="1" />
      <path d="m0 0 14-3" stroke="#15c415" />
      <path d="m13-6 9 1-8 4Z" fill="#12a812" />
      <path d="m0 0 11 4" stroke="#f01414" />
      <path d="m11 1 8 6-8 1Z" fill="#e01414" />
      <text x="-4" y="-28" fill="#1c1cff">Z</text>
      <text x="22" y="0" fill="#11ee11">Y</text>
      <text x="17" y="14" fill="#ff1010">X</text>
    </g>
  );
}

function Viewport() {
  return (
    <main className="ml-[3px] flex min-w-0 flex-1 flex-col overflow-hidden pt-0.5">
      <div className="flex h-[22px] shrink-0 items-stretch">
        <div className="z-10 ml-0.5 flex h-[23px] w-[119px] items-center border border-b-0 border-[#b9bfc9] bg-[#fcfcfc] pl-3.5 text-black">
          <svg viewBox="0 0 10 10" className="size-2.5" aria-hidden="true"><path d="M5 0v10M0 5h10" stroke="#75623b" strokeWidth="2" /></svg>
          <span className="ml-1.5">零件002.Z3</span>
          <button aria-label="关闭文件" className="ml-auto pr-3">
            <svg viewBox="0 0 10 10" className="size-2.5"><path d="m1 1 8 8M9 1 1 9" stroke="#75623b" strokeWidth="2" /></svg>
          </button>
        </div>
        <button aria-label="新建文件" className="ml-2">
          <svg viewBox="0 0 10 10" className="size-2.5"><path d="M5 0v10M0 5h10" stroke="#a69c98" strokeWidth="2" /></svg>
        </button>
      </div>
      <div className="relative flex min-h-0 flex-1 flex-col overflow-hidden border-t border-b border-l border-[#b9bfc9] border-b-white bg-linear-to-b from-white to-[#9c9c9c]">
        <svg viewBox="286 194 508 503" width="508" height="503" className="absolute top-0 left-0 font-['Noto_Sans',sans-serif]" fill="none" role="img" aria-label="草图1">
          <path
            d="M433 658 443 264 520 283 535 396 543 420Q548 431 556 442L573 457 593 465 614 468 629 474 640 485Q647 496 648 506L650 521 649 534 756 548 755 597 433 662Z"
            stroke="#5b5b5b"
            strokeWidth="2"
          />
          <path d="M540 459h8M544 455v8M647 473h8M651 469v8" stroke="#838383" strokeWidth="1.500" />
          <path d="M414 643 451 635V681L413 689Z" fill="#a3a88c" fillOpacity="0.4" stroke="#f02020" />
          <path d="M417 633 449 645V691L416 679Z" fill="#a3a88c" fillOpacity="0.4" stroke="#20e020" />
          <path d="M399 661 435 653 466 664 429 672Z" fill="#8f91a8" fillOpacity="0.4" stroke="#2020e0" />
          <g transform="translate(343 641)"><Triad /></g>
          <g transform="translate(433 662)"><Triad /></g>
        </svg>
        <div className="mt-1 -mr-1 flex shrink-0 items-center gap-2.5 self-end">
          {viewTools.map((tool) => (
            <button key={tool.label} aria-label={tool.label} className="flex items-center gap-[5px]">
              <Icon>{tool.icon}</Icon>
              {tool.caret && <Caret />}
            </button>
          ))}
        </div>
        <p className="mt-3 ml-5 leading-[15px] text-black">
          您可以在自定义设置里设置热键
          <br />
          单击"帮助/显示提示"按钮来取消这些提示.
        </p>
        <p className="mt-auto mb-px ml-1 font-['Noto_Sans',sans-serif] text-[17px] leading-5 text-black">200 mm</p>
      </div>
    </main>
  );
}

function Annotation() {
  return (
    <svg viewBox="0 0 794 726" width="794" height="726" className="pointer-events-none absolute top-0 left-0 z-20" fill="none" aria-hidden="true">
      <g stroke="#fb0909" strokeWidth="2" strokeLinecap="round" strokeLinejoin="round">
        <path d="M66 307Q48 306 45 309L41 317Q42 325 49 326L61 328" />
        <path d="M130 306 142 305Q170 304 181 308 192 314 193 318 193 328 178 331L165 333" />
        <path d="M187 324Q205 325 220 329 255 335 283 343 299 348 312 358L346 379 366 396 383 408 399 415" />
        <path d="m393 406 12 20-25-6 23 4-6-17 1 10 6 9-21-5" />
      </g>
    </svg>
  );
}

export default function App() {
  return (
    <div className="relative flex h-screen flex-col overflow-hidden bg-[#e1e5e8] font-['Noto_Sans_CJK_SC',sans-serif] text-[12px] text-[#222]">
      <Gradients />
      <QuickAccess />
      <Ribbon />
      <SelectionBar />
      <div className="flex min-h-0 flex-1">
        <Manager />
        <Viewport />
      </div>
      <footer className="flex h-7 shrink-0 items-center justify-between pt-1.5 pr-2.5 pl-1.5 text-[#333]">
        <span>选择命令或实体</span>
        <span className="mb-4 font-['Liberation_Sans',sans-serif] text-[16px] text-[#f5f6f7] [text-shadow:1px_1px_1px_#bfc3c7]">https://blog.csdn.net/gwf85</span>
      </footer>
      <Annotation />
    </div>
  );
}
